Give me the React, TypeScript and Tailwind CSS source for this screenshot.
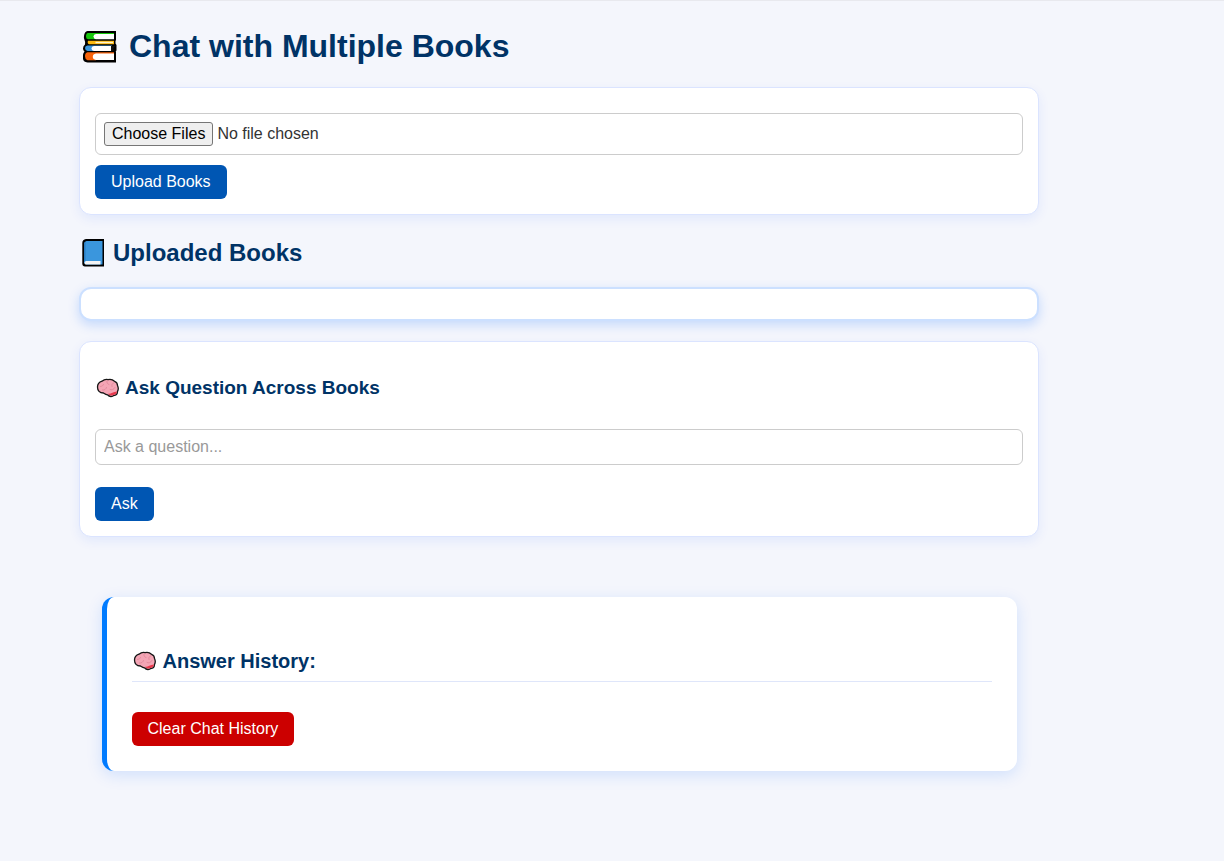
import { useState } from "react";

function BooksIcon() {
  return (
    <svg viewBox="0 0 36 34" className="h-[34px] w-9 shrink-0" aria-hidden="true">
      <path
        d="M5.500 2H34V11.500H33.500V14.500L34.500 16V21.500L33.500 22.500H34V33.500H5.500Q1 33 1 29.500V26Q1 24 2.500 22.500Q1 21.500 1 19.500Q1 17 3 15.500Q3.500 12.500 2.500 11Q1.500 9.500 2 7Q2.500 2.500 5.500 2Z"
        fill="#000"
      />
      <path d="M6 4H32V5H14V10.300H6Q4 10 4 7.500Q4 4.300 6 4Z" fill="#16c60c" />
      <path d="M14 5H32V10.300H14Q11.500 10 11.500 7.600Q11.500 5.300 14 5Z" fill="#fff" />
      <path d="M6 11.700H32V15.200H7Q5 14.500 6 11.700Z" fill="#fcb90f" />
      <path d="M13.500 12.800H31V14.200H13.500Z" fill="#fff3d0" />
      <path d="M5.500 16.500H30V22H5.500Q3 21.500 3 19Q3 16.800 5.500 16.500Z" fill="#3a96dd" />
      <path d="M12 17H29V22H12Q9.500 21.500 9.500 19.500Q9.500 17.300 12 17Z" fill="#fff" />
      <path d="M29 17H33L31.500 19.500V22H29Z" fill="#111" />
      <path d="M5.500 23.300H32V25H14V31.300H5.500Q3 30.500 3 27.300Q3 23.800 5.500 23.300Z" fill="#f7630c" />
      <path d="M14 24.500H32V31H14Q10.800 30.500 10.800 27.800Q10.800 25 14 24.500Z" fill="#fff" />
    </svg>
  );
}

function BlueBookIcon() {
  return (
    <svg viewBox="0 0 24 28" className="h-7 w-6 shrink-0" aria-hidden="true">
      <path d="M5 0H23V27.500H4Q1.300 27.500 1.300 24.500V4Q1.300 .500 5 0Z" fill="#000" />
      <path d="M5.500 2H21.500V25.500H5L3 24V4.500Q3 2.500 5.500 2Z" fill="#3a96dd" />
      <path d="M3 4.500L4.500 3V21.500L3 23Z" fill="#2b7dc0" />
      <path d="M5 22H19.500V25.500H5Q3.500 25.500 3.500 24Q3.500 22.500 5 22Z" fill="#f4f4f4" />
    </svg>
  );
}

function BrainIcon() {
  return (
    <svg viewBox="0 0 24 20" className="h-5 w-6 shrink-0" aria-hidden="true">
      <path
        d="M1.500 9C1.500 6 3.500 4 6 3.200C8 1.500 10 1 12 1.600C15 .800 17 1.800 18.500 3.300C20.500 4 21.500 5.500 21.500 7.500C22.500 9.500 22.300 12 21.500 13.500C21.500 16 19.500 17.500 17.500 17.700C15.500 18.800 13 18.500 11.500 16.800C9 16.500 8.500 15.500 7.500 15C3.500 15 1.500 12.500 1.500 9Z"
        fill="#f4a5b5"
        stroke="#151515"
        strokeWidth="1.300"
      />
      <path
        d="M12 15.500C14 16.500 16.500 14 21 13.500C20.800 15.800 19 16.800 17.300 17C15.500 18 13.200 17.500 12 15.500Z"
        fill="#e8394d"
      />
      <path
        d="M4.500 8.500C6 8.500 7 7.500 7.500 6.500M11 3C10.500 5 11.500 6 13 6.500M17.500 5C16 5.500 15.500 7 16 8.500M6.500 12C8.500 12.500 10 11 10.500 9.500M14 11.500C15.500 12.500 18 11.500 19 9.500"
        fill="none"
        stroke="#e38b9d"
        strokeWidth="1"
        strokeLinecap="round"
      />
    </svg>
  );
}

const card =
  "rounded-xl border border-[#dbe4ff] bg-white p-[15px] shadow-[0_4px_12px_rgba(0,80,255,0.08)]";
const button = "h-[34px] cursor-pointer rounded-md px-4 text-base leading-[18px] text-white";

export default function App() {
  const [question, setQuestion] = useState("");

  return (
    <div className="min-h-screen border-t border-[#e8e9ee] bg-[#f4f6fc] pb-10 font-['Liberation_Sans',Arial,sans-serif] text-[#333]">
      <main className="mr-4 ml-[79px] max-w-[960px] pt-[26px]">
        <h1 className="flex items-center gap-[11px] pl-[3px] text-[32px] leading-[38px] font-bold text-[#003366]">
          <BooksIcon />
          Chat with Multiple Books
        </h1>

        <section className={`mt-[22px] ${card}`}>
          <form onSubmit={(e) => e.preventDefault()}>
            <input
              type="file"
              multiple
              aria-label="Books to upload"
              className="mt-[10px] block w-full rounded-md border border-[#ccc] p-2 text-base leading-6 file:mr-1 file:h-6 file:rounded-[3px] file:border file:border-solid file:border-[#767676] file:bg-[#efefef] file:px-[7px] file:text-base file:leading-5 file:text-black"
            />
            <button type="submit" className={`mt-[10px] block bg-[#0056b3] ${button}`}>
              Upload Books
            </button>
          </form>
        </section>

        <h2 className="mt-6 flex items-center gap-2 pl-[2px] text-2xl leading-7 font-bold text-[#003366]">
          <BlueBookIcon />
          Uploaded Books
        </h2>
        <ul
          aria-label="Uploaded books"
          className="mt-5 rounded-xl border-2 border-[#cce0ff] bg-white p-[15px] shadow-[0_4px_12px_rgba(0,100,255,0.2)]"
        />

        <section className={`mt-5 ${card}`}>
          <h3 className="mt-5 flex items-center gap-[5px] pl-px text-[19px] leading-[22px] font-bold text-[#003366]">
            <BrainIcon />
            Ask Question Across Books
          </h3>
          <form onSubmit={(e) => e.preventDefault()}>
            <input
              type="text"
              aria-label="Question"
              placeholder="Ask a question..."
              value={question}
              onChange={(e) => setQuestion(e.target.value)}
              className="mt-[30px] block h-9 w-full rounded-md border border-[#ccc] px-2 text-base placeholder:text-[#999]"
            />
            <button type="submit" className={`mt-[22px] block bg-[#0056b3] ${button}`}>
              Ask
            </button>
          </form>
        </section>

        <section className="mx-auto mt-[60px] max-w-[915px] rounded-xl border-l-[5px] border-[#007bff] bg-white p-[25px] shadow-[0_4px_16px_rgba(0,100,255,0.15)]">
          <h3 className="mt-7 flex items-center gap-[6px] border-b border-[#dfe6fa] pb-[9px] pl-px text-xl leading-[22px] font-bold text-[#003366]">
            <BrainIcon />
            Answer History:
          </h3>
          <button type="button" className={`mt-[30px] block bg-[#cc0000] ${button}`}>
            Clear Chat History
          </button>
        </section>
      </main>
    </div>
  );
}
